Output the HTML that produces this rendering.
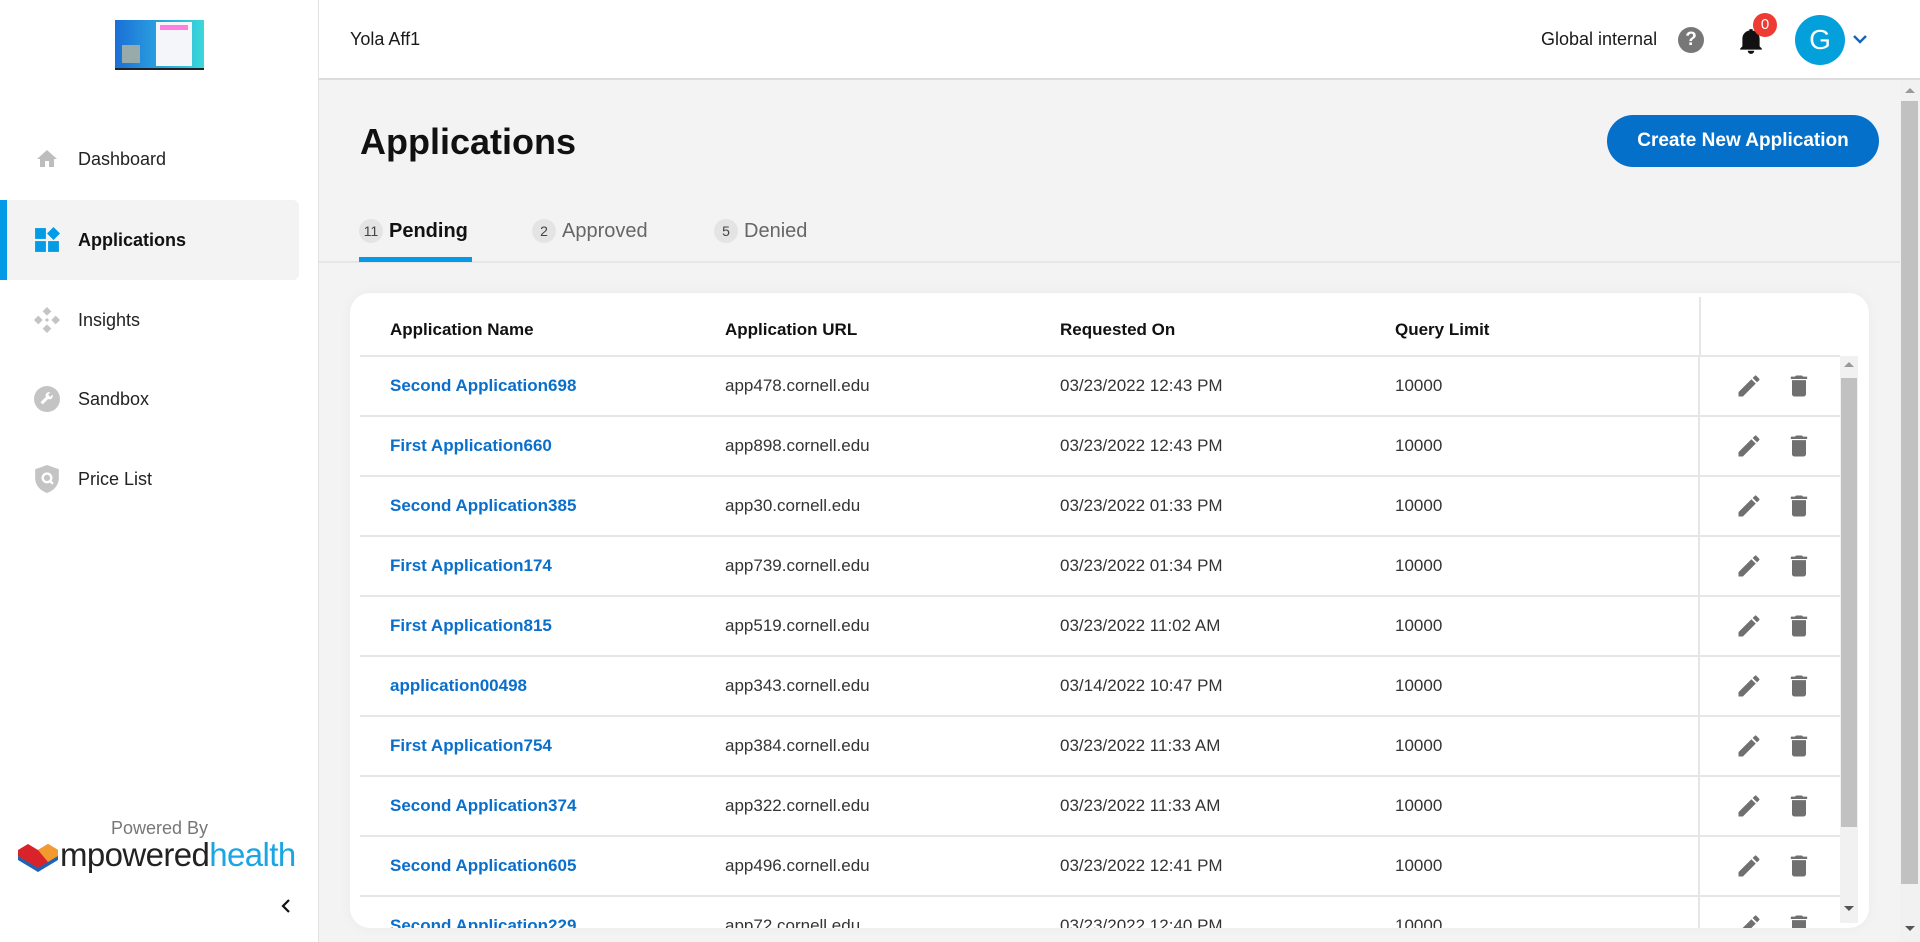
<!DOCTYPE html>
<html><head><meta charset="utf-8"><style>
*{box-sizing:border-box;margin:0;padding:0}
body{width:1920px;height:942px;overflow:hidden;font-family:"Liberation Sans",sans-serif;background:#f3f3f3;position:relative;color:#1a1a1a}
.side{position:absolute;left:0;top:0;width:319px;height:942px;background:#fff;border-right:1px solid #e2e2e2}
.nav{position:absolute;left:0;width:299px;height:80px;display:flex;align-items:center;font-size:18px;color:#222}
.nav svg{position:absolute;left:34px}
.nav span{position:absolute;left:78px}
.hdr{position:absolute;left:319px;top:0;width:1601px;height:80px;background:#fff;border-bottom:2px solid #dcdcdc}
.abs{position:absolute}
.card{position:absolute;left:350px;top:293px;width:1519px;height:635px;background:#fff;border-radius:20px;overflow:hidden;box-shadow:0 0 12px rgba(0,0,0,.04)}
.th{position:absolute;top:27px;font-size:17px;font-weight:bold;color:#111}
.row{position:absolute;left:10px;width:1480px;height:60px;border-top:2px solid #e6e6e6;font-size:17px}
.row div{position:absolute;top:19px}
.row .n{left:30px;color:#0a6fcb;font-weight:bold}
.row .u{left:365px;color:#333}
.row .d{left:700px;color:#333}
.row .q{left:1035px;color:#333}
.row .vl{position:absolute;left:1338px;top:0;width:2px;height:60px;background:#e6e6e6}
.tab{position:absolute;top:219px;font-size:20px;display:flex;align-items:center}
.bd{display:inline-block;width:24px;height:24px;border-radius:12px;background:#e4e4e4;font-size:14px;text-align:center;line-height:24px;margin-right:6px;color:#444}
</style></head><body>
<div class="side">
  <div class="abs" style="left:115px;top:20px;width:89px;height:50px;background:linear-gradient(90deg,#1a6fd6,#2aa0e0 48%,#3ad8d8);"></div>
  <div class="abs" style="left:156px;top:22px;width:36px;height:44px;background:#f4f6fa"></div>
  <div class="abs" style="left:122px;top:45px;width:18px;height:18px;background:#9aa"></div>
  <div class="abs" style="left:160px;top:25px;width:28px;height:5px;background:#ff7ee0"></div>
  <div class="abs" style="left:115px;top:68px;width:89px;height:2px;background:#222"></div>
  <div class="nav" style="top:119px"><svg width="26" height="24" viewBox="0 0 24 24"><path d="M10 20v-6h4v6h5v-8h3L12 3 2 12h3v8z" fill="#bdbdbd"/></svg><span>Dashboard</span></div>
  <div class="nav" style="top:200px;left:7px;width:292px;background:#f3f3f3;border-radius:0 6px 6px 0"><svg style="left:27px" width="26" height="26" viewBox="0 0 24 24"><rect x="1" y="1" width="10" height="10" fill="#039be5"/><rect x="1" y="13" width="10" height="10" fill="#039be5"/><rect x="13" y="13" width="10" height="10" fill="#039be5"/><path d="M18 0l6 6-6 6-6-6z" fill="#039be5"/></svg><span style="left:71px;font-weight:bold;color:#111">Applications</span></div>
  <div class="abs" style="left:0;top:200px;width:7px;height:80px;background:#039be5"></div>
  <div class="nav" style="top:280px"><svg width="26" height="26" viewBox="0 0 24 24" fill="#c4c4c4"><path d="M12 0l4 4-4 4-4-4zM12 16l4 4-4 4-4-4zM0 12l4-4 4 4-4 4zM16 12l4-4 4 4-4 4z"/><circle cx="12" cy="12" r="1.5"/></svg><span>Insights</span></div>
  <div class="nav" style="top:359px"><svg width="26" height="26" viewBox="0 0 24 24"><circle cx="12" cy="12" r="12" fill="#c4c4c4"/><path d="M8 17l5-5a3 3 0 004-4l-2 2-2-2 2-2a3 3 0 00-4 4l-5 5z" fill="#fff"/></svg><span>Sandbox</span></div>
  <div class="nav" style="top:439px"><svg width="26" height="28" viewBox="0 0 24 26"><path d="M12 0l11 4v8c0 7-5 12-11 14C6 24 1 19 1 12V4z" fill="#c4c4c4"/><circle cx="12" cy="12" r="4" fill="none" stroke="#fff" stroke-width="2.2"/><path d="M14.5 14.5l3 3" stroke="#fff" stroke-width="2.2"/></svg><span>Price List</span></div>
  <div class="abs" style="left:0;width:319px;top:818px;text-align:center;font-size:18px;color:#777">Powered By</div>
  <svg class="abs" style="left:18px;top:842px" width="40" height="32" viewBox="0 0 40 32"><path d="M0 8l10-6 10 6 10-6 10 6v6L20 30 0 14z" fill="#d8232a"/><path d="M20 8l10-6 10 6v6l-10 6z" fill="#f29a2e"/><path d="M0 14l20 12 20-12v4L20 30 0 18z" fill="#1e63b5"/></svg>
  <div class="abs" style="left:60px;top:836px;font-size:33px;letter-spacing:-0.6px;color:#222">mpowered<span style="color:#1aa5e4">health</span></div>
  <svg class="abs" style="left:279px;top:898px" width="14" height="16" viewBox="0 0 14 16"><path d="M10 2L4 8l6 6" stroke="#111" stroke-width="2.2" fill="none"/></svg>
</div>
<div class="hdr">
  <div class="abs" style="left:31px;top:29px;font-size:18px">Yola Aff1</div>
  <div class="abs" style="left:1222px;top:29px;font-size:18px">Global internal</div>
  <div class="abs" style="left:1359px;top:27px;width:26px;height:26px;border-radius:13px;background:#777;color:#fff;font-weight:bold;text-align:center;line-height:26px;font-size:19px">?</div>
  <svg class="abs" style="left:1419px;top:27px" width="26" height="28" viewBox="0 0 24 26"><path d="M12 25a3 3 0 003-3H9a3 3 0 003 3zM20 18v-7c0-4-2.5-7-6.5-7.7V2h-3v1.3C6.5 4 4 7 4 11v7l-2 2v1h20v-1z" fill="#111"/></svg>
  <div class="abs" style="left:1434px;top:13px;width:24px;height:24px;border-radius:12px;background:#ee3b33;color:#fff;text-align:center;line-height:24px;font-size:15px">0</div>
  <div class="abs" style="left:1476px;top:15px;width:50px;height:50px;border-radius:25px;background:#03a0dc;color:#fff;text-align:center;line-height:50px;font-size:28px">G</div>
  <svg class="abs" style="left:1533px;top:33px" width="16" height="12" viewBox="0 0 16 12"><path d="M2 3l6 6 6-6" stroke="#1565c0" stroke-width="2.4" fill="none"/></svg>
</div>
<div class="abs" style="left:360px;top:121px;font-size:36px;font-weight:bold;color:#111">Applications</div>
<div class="abs" style="left:1607px;top:115px;width:272px;height:52px;border-radius:26px;background:#0570c9;color:#fff;font-size:19px;font-weight:bold;text-align:center;line-height:52px">Create New Application</div>
<div class="tab" style="left:359px"><span class="bd">11</span><b style="color:#111">Pending</b></div>
<div class="tab" style="left:532px;color:#666"><span class="bd">2</span>Approved</div>
<div class="tab" style="left:714px;color:#666"><span class="bd">5</span>Denied</div>
<div class="abs" style="left:319px;top:261px;width:1581px;height:2px;background:#e6e6e6"></div>
<div class="abs" style="left:359px;top:257px;width:113px;height:5px;background:#039be5"></div>
<div class="card">
  <div class="th" style="left:40px">Application Name</div>
  <div class="th" style="left:375px">Application URL</div>
  <div class="th" style="left:710px">Requested On</div>
  <div class="th" style="left:1045px">Query Limit</div>
  <div class="abs" style="left:1349px;top:4px;width:2px;height:60px;background:#e6e6e6"></div>
  <div id="rows"></div>
  <div class="abs" style="left:1490px;top:63px;width:18px;height:567px;background:#f1f1f1"></div>
  <div class="abs" style="left:1491px;top:85px;width:16px;height:449px;background:#c1c1c1"></div>
  <svg class="abs" style="left:1494px;top:68px" width="10" height="8"><path d="M0 6l5-5 5 5z" fill="#999"/></svg>
  <svg class="abs" style="left:1494px;top:612px" width="10" height="8"><path d="M0 1h10l-5 5z" fill="#555"/></svg>
</div>
<div class="abs" style="left:1900px;top:80px;width:20px;height:862px;background:#f1f1f1"></div>
<div class="abs" style="left:1901px;top:101px;width:17px;height:783px;background:#c1c1c1"></div>
<svg class="abs" style="left:1905px;top:87px" width="10" height="8"><path d="M0 6l5-5 5 5z" fill="#999"/></svg>
<svg class="abs" style="left:1905px;top:925px" width="10" height="8"><path d="M0 1h10l-5 5z" fill="#555"/></svg>
<script>
var d=[["Second Application698","app478.cornell.edu","03/23/2022 12:43 PM"],["First Application660","app898.cornell.edu","03/23/2022 12:43 PM"],["Second Application385","app30.cornell.edu","03/23/2022 01:33 PM"],["First Application174","app739.cornell.edu","03/23/2022 01:34 PM"],["First Application815","app519.cornell.edu","03/23/2022 11:02 AM"],["application00498","app343.cornell.edu","03/14/2022 10:47 PM"],["First Application754","app384.cornell.edu","03/23/2022 11:33 AM"],["Second Application374","app322.cornell.edu","03/23/2022 11:33 AM"],["Second Application605","app496.cornell.edu","03/23/2022 12:41 PM"],["Second Application229","app72.cornell.edu","03/23/2022 12:40 PM"]];
var h="";
var pen='<svg style="position:absolute;left:1375px;top:15px" width="28" height="28" viewBox="0 0 24 24"><path d="M3 17.25V21h3.75L17.8 9.94l-3.75-3.75zM20.7 7.04a1 1 0 000-1.41l-2.34-2.34a1 1 0 00-1.41 0l-1.83 1.83 3.75 3.75z" fill="#707070"/></svg>';
var tr='<svg style="position:absolute;left:1425px;top:15px" width="28" height="28" viewBox="0 0 24 24"><path d="M6 19c0 1.1.9 2 2 2h8c1.1 0 2-.9 2-2V7H6zM19 4h-3.5l-1-1h-5l-1 1H5v2h14z" fill="#707070"/></svg>';
for(var i=0;i<10;i++){h+='<div class="row" style="top:'+(62+60*i)+'px"><div class="n">'+d[i][0]+'</div><div class="u">'+d[i][1]+'</div><div class="d">'+d[i][2]+'</div><div class="q">10000</div><span class="vl"></span>'+pen+tr+'</div>';}
document.getElementById("rows").innerHTML=h;
</script>
</body></html>
